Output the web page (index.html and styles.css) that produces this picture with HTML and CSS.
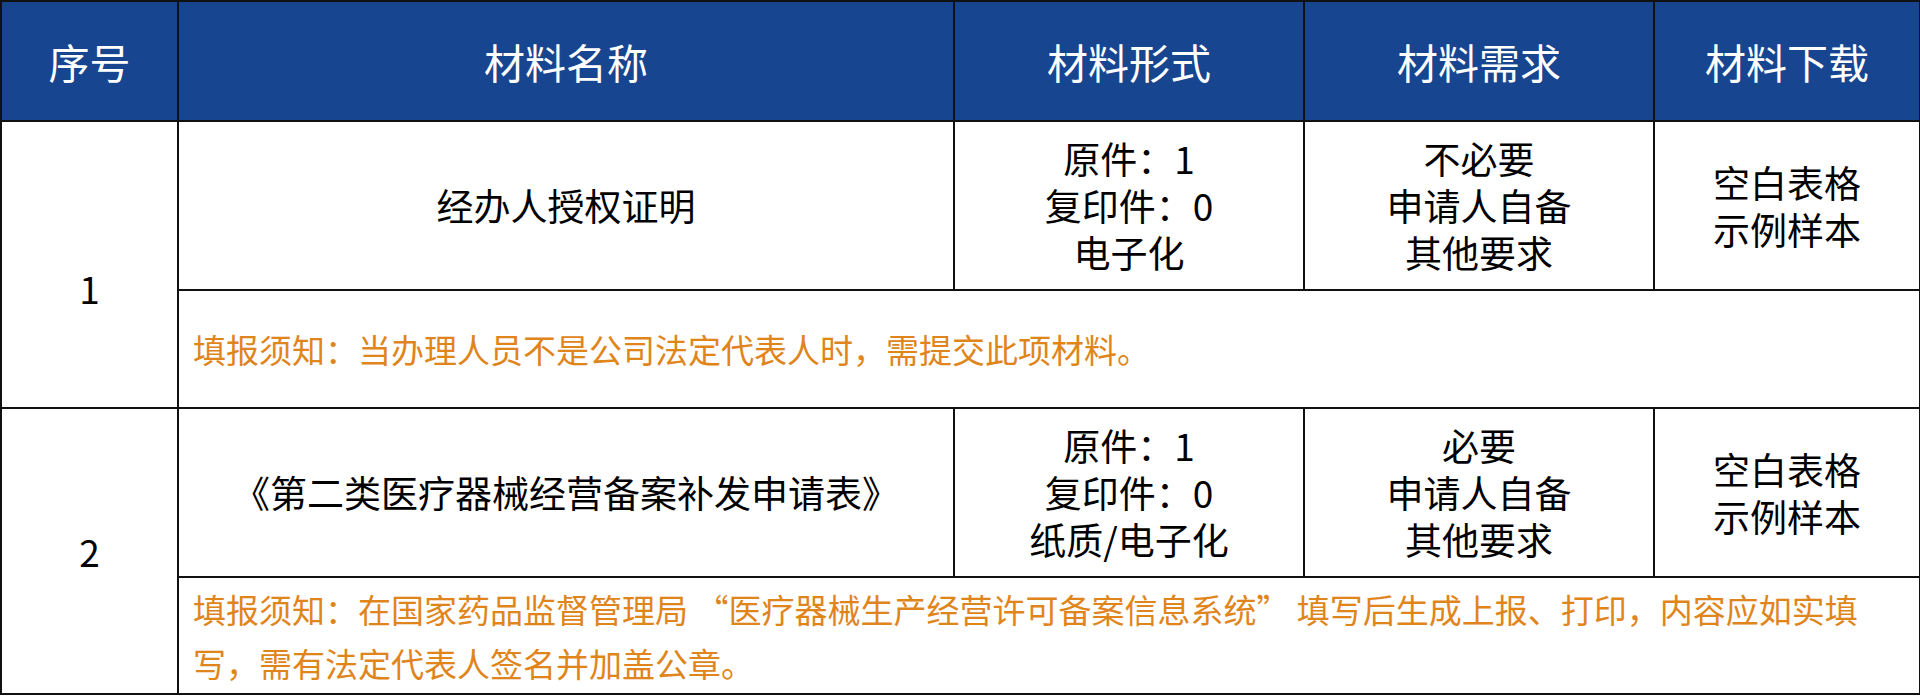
FILE: index.html
```html
<!DOCTYPE html>
<html lang="zh-CN">
<head>
<meta charset="utf-8">
<title>材料清单</title>
<link rel="stylesheet" href="styles.css">
</head>
<body>
<table class="materials">
  <colgroup>
    <col class="c-num">
    <col class="c-name">
    <col class="c-form">
    <col class="c-need">
    <col class="c-dl">
  </colgroup>
  <thead>
    <tr class="head-row">
      <th>序号</th>
      <th>材料名称</th>
      <th>材料形式</th>
      <th>材料需求</th>
      <th>材料下载</th>
    </tr>
  </thead>
  <tbody>
    <tr class="main-row">
      <td class="num num-first" rowspan="2">1</td>
      <td class="name">经办人授权证明</td>
      <td class="multi">原件：1<br>复印件：0<br>电子化</td>
      <td class="multi">不必要<br>申请人自备<br>其他要求</td>
      <td class="multi">空白表格<br>示例样本</td>
    </tr>
    <tr class="note-row">
      <td class="note" colspan="4">填报须知：当办理人员不是公司法定代表人时，需提交此项材料。</td>
    </tr>
    <tr class="main-row">
      <td class="num" rowspan="2">2</td>
      <td class="name">《第二类医疗器械经营备案补发申请表》</td>
      <td class="multi">原件：1<br>复印件：0<br>纸质/电子化</td>
      <td class="multi">必要<br>申请人自备<br>其他要求</td>
      <td class="multi">空白表格<br>示例样本</td>
    </tr>
    <tr class="note-row note-row-tall">
      <td class="note note-two" colspan="4">填报须知：在国家药品监督管理局 “医疗器械生产经营许可备案信息系统” 填写后生成上报、打印，内容应如实填写，需有法定代表人签名并加盖公章。</td>
    </tr>
  </tbody>
</table>
</body>
</html>
```

FILE: styles.css
```css
html, body {
  margin: 0;
  padding: 0;
  background: #ffffff;
}

body {
  font-family: "Noto Sans CJK SC", "Noto Sans", sans-serif;
  color: #000000;
}

.materials {
  width: 1919px;
  border-collapse: collapse;
  table-layout: fixed;
}

.c-num { width: 177px; }
.c-name { width: 776px; }
.c-form { width: 350px; }
.c-need { width: 350px; }
.c-dl { width: 266px; }

.materials th,
.materials td {
  border: 2px solid #111111;
  padding: 0;
  text-align: center;
  vertical-align: middle;
}

.head-row th {
  height: 118px;
  background: #17458f;
  color: #ffffff;
  font-weight: 400;
  font-size: 41px;
  line-height: 48px;
}

.main-row td {
  height: 167px;
  font-size: 37px;
  line-height: 47px;
}

.num {
  font-size: 37px;
  line-height: 47px;
}

.num-first {
  padding-top: 48px !important;
}

.note-row td {
  height: 116px;
}

.note-row-tall td {
  height: 115px;
}

.note {
  text-align: left !important;
  padding: 0 30px 0 14px !important;
  color: #e0851b;
  font-size: 33px;
  line-height: 56px;
}

.note-two {
  line-height: 54px;
}
```
